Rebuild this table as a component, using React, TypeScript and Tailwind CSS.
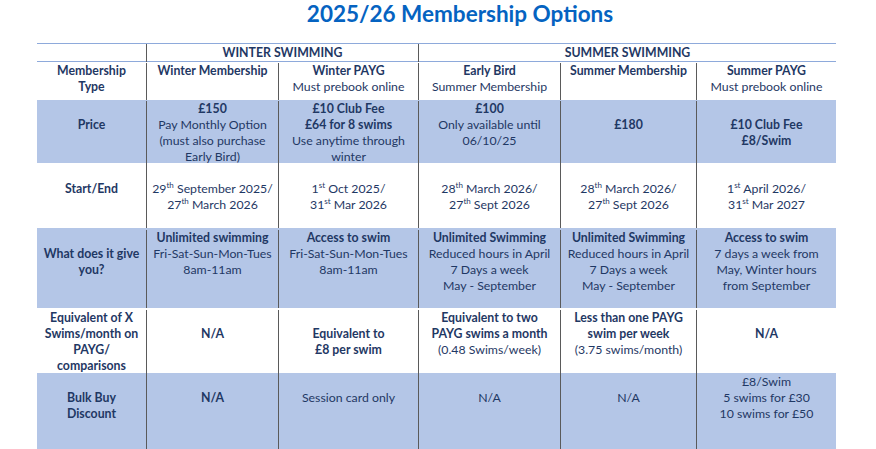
import React from 'react';

const grid = 'grid grid-cols-[109px_132px_140px_142px_136px_140px]';
const vline = 'border-l border-[#5a5a5a]';

type CellProps = {
  skip?: number;
  first?: boolean;
  children: React.ReactNode;
};

// one table cell, skip = blank lines above the text (the source doc pads with empty lines)
function Cell({ skip = 0, first = false, children }: CellProps) {
  const pad = ['pt-0', 'pt-[16px]', 'pt-[32px]'][skip];
  return (
    <div className={`${first ? '' : vline} ${pad} flex flex-col items-center text-center`}>
      {children}
    </div>
  );
}

const B = ({ children }: { children: React.ReactNode }) => (
  <span className="font-bold whitespace-nowrap">{children}</span>
);
const T = ({ children }: { children: React.ReactNode }) => (
  <span className="whitespace-nowrap">{children}</span>
);
const Sup = ({ children }: { children: React.ReactNode }) => (
  <sup className="text-[8px] -top-[5px]">{children}</sup>
);

export default function App() {
  return (
    <div className="w-[876px] h-[449px] overflow-hidden bg-white font-['Lato',sans-serif] text-[#1f3864] text-[12.3px] leading-[16px]">
      <h1 className="h-[28px] mb-[15px] pl-[44px] text-center text-[22.5px] leading-[28px] font-bold text-[#0563c1]">
        2025/26 Membership Options
      </h1>

      <div className="ml-[37px] w-[799px]">
        {/* group headings */}
        <div className={`${grid} h-[19px] border-y border-[#8eaadb]`}>
          <div />
          <div className={`${vline} col-span-2 text-center font-bold leading-[18px]`}>WINTER SWIMMING</div>
          <div className={`${vline} col-span-3 text-center font-bold leading-[18px]`}>SUMMER SWIMMING</div>
        </div>

        {/* membership type */}
        <div className={`${grid} h-[38px] pt-[1px]`}>
          <Cell first>
            <B>Membership</B>
            <B>Type</B>
          </Cell>
          <Cell>
            <B>Winter Membership</B>
          </Cell>
          <Cell>
            <B>Winter PAYG</B>
            <T>Must prebook online</T>
          </Cell>
          <Cell>
            <B>Early Bird</B>
            <T>Summer Membership</T>
          </Cell>
          <Cell>
            <B>Summer Membership</B>
          </Cell>
          <Cell>
            <B>Summer PAYG</B>
            <T>Must prebook online</T>
          </Cell>
        </div>

        {/* price */}
        <div className={`${grid} h-[63px] pt-[1px] bg-[#b4c6e7]`}>
          <Cell first skip={1}>
            <B>Price</B>
          </Cell>
          <Cell>
            <B>£150</B>
            <T>Pay Monthly Option</T>
            <T>(must also purchase</T>
            <T>Early Bird)</T>
          </Cell>
          <Cell>
            <B>£10 Club Fee</B>
            <B>£64 for 8 swims</B>
            <T>Use anytime through</T>
            <T>winter</T>
          </Cell>
          <Cell>
            <B>£100</B>
            <T>Only available until</T>
            <T>06/10/25</T>
          </Cell>
          <Cell skip={1}>
            <B>£180</B>
          </Cell>
          <Cell skip={1}>
            <B>£10 Club Fee</B>
            <B>£8/Swim</B>
          </Cell>
        </div>

        {/* start / end */}
        <div className={`${grid} h-[65px] pt-[2px]`}>
          <Cell first skip={1}>
            <B>Start/End</B>
          </Cell>
          <Cell skip={1}>
            <T>29<Sup>th</Sup> September 2025/</T>
            <T>27<Sup>th</Sup> March 2026</T>
          </Cell>
          <Cell skip={1}>
            <T>1<Sup>st</Sup> Oct 2025/</T>
            <T>31<Sup>st</Sup> Mar 2026</T>
          </Cell>
          <Cell skip={1}>
            <T>28<Sup>th</Sup> March 2026/</T>
            <T>27<Sup>th</Sup> Sept 2026</T>
          </Cell>
          <Cell skip={1}>
            <T>28<Sup>th</Sup> March 2026/</T>
            <T>27<Sup>th</Sup> Sept 2026</T>
          </Cell>
          <Cell skip={1}>
            <T>1<Sup>st</Sup> April 2026/</T>
            <T>31<Sup>st</Sup> Mar 2027</T>
          </Cell>
        </div>

        {/* what does it give you */}
        <div className={`${grid} h-[80px] pt-[2px] bg-[#b4c6e7]`}>
          <Cell first skip={1}>
            <B>What does it give</B>
            <B>you?</B>
          </Cell>
          <Cell>
            <B>Unlimited swimming</B>
            <T>Fri-Sat-Sun-Mon-Tues</T>
            <T>8am-11am</T>
          </Cell>
          <Cell>
            <B>Access to swim</B>
            <T>Fri-Sat-Sun-Mon-Tues</T>
            <T>8am-11am</T>
          </Cell>
          <Cell>
            <B>Unlimited Swimming</B>
            <T>Reduced hours in April</T>
            <T>7 Days a week</T>
            <T>May - September</T>
          </Cell>
          <Cell>
            <B>Unlimited Swimming</B>
            <T>Reduced hours in April</T>
            <T>7 Days a week</T>
            <T>May - September</T>
          </Cell>
          <Cell>
            <B>Access to swim</B>
            <T>7 days a week from</T>
            <T>May, Winter hours</T>
            <T>from September</T>
          </Cell>
        </div>

        {/* equivalent */}
        <div className={`${grid} h-[65px] pt-[2px]`}>
          <Cell first>
            <B>Equivalent of X</B>
            <B>Swims/month on</B>
            <B>PAYG/</B>
            <B>comparisons</B>
          </Cell>
          <Cell skip={1}>
            <B>N/A</B>
          </Cell>
          <Cell skip={1}>
            <B>Equivalent to</B>
            <B>£8 per swim</B>
          </Cell>
          <Cell>
            <B>Equivalent to two</B>
            <B>PAYG swims a month</B>
            <T>(0.48 Swims/week)</T>
          </Cell>
          <Cell>
            <B>Less than one PAYG</B>
            <B>swim per week</B>
            <T>(3.75 swims/month)</T>
          </Cell>
          <Cell skip={1}>
            <B>N/A</B>
          </Cell>
        </div>

        {/* bulk buy */}
        <div className={`${grid} h-[76px] pt-[1px] bg-[#b4c6e7]`}>
          <Cell first skip={1}>
            <B>Bulk Buy</B>
            <B>Discount</B>
          </Cell>
          <Cell skip={1}>
            <B>N/A</B>
          </Cell>
          <Cell skip={1}>
            <T>Session card only</T>
          </Cell>
          <Cell skip={1}>
            <T>N/A</T>
          </Cell>
          <Cell skip={1}>
            <T>N/A</T>
          </Cell>
          <Cell>
            <T>£8/Swim</T>
            <T>5 swims for £30</T>
            <T>10 swims for £50</T>
          </Cell>
        </div>
      </div>
    </div>
  );
}
